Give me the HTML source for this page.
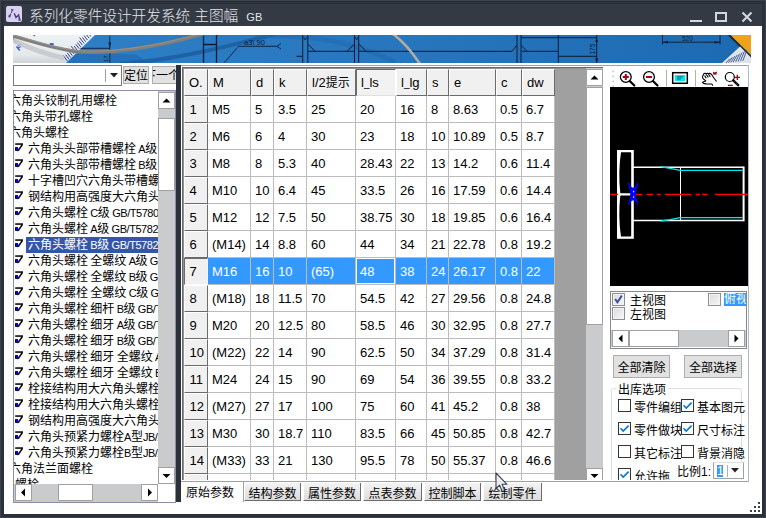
<!DOCTYPE html>
<html lang="zh-CN"><head><meta charset="utf-8"><title>系列化零件设计开发系统</title>
<style>
html,body{margin:0;padding:0}
body{width:766px;height:518px;overflow:hidden;position:relative;background:#2e343e;font-family:"Liberation Sans","Noto Sans CJK SC",sans-serif;}
.a{position:absolute;box-sizing:border-box}
.s{font:12px/16px "Liberation Sans","Noto Sans CJK SC",sans-serif;color:#000;white-space:nowrap}
.t{font:13px/27px "Liberation Sans","Noto Sans CJK SC",sans-serif;color:#000;white-space:nowrap;overflow:hidden}
.hc{background:#f0f0f0;border-top:1px solid #fff;border-left:1px solid #fff;border-right:1px solid #6b6b6b;border-bottom:1px solid #6b6b6b;padding-left:4px;line-height:27px}
.dc{background:#fff;border-right:1px solid #bcbcbc;border-bottom:1px solid #bcbcbc;padding-left:4px;line-height:28px}
.sel{background:#3399ff;color:#fff}
.sb{background:#fff;border:1px solid #a0a0a0}
.l{font-size:11px;letter-spacing:-0.45px;word-spacing:-0.3px}
.trk{background:#c9cbcd}
.btn{background:#e1e1e1;border:1px solid #adadad;text-align:center}
.cb{width:13px;height:13px;background:#fff;border:1px solid #333}
.tab{background:#f0f0f0;border-right:1px solid #6b6b6b;border-bottom:1px solid #6b6b6b;border-left:1px solid #fff;text-align:center;background:linear-gradient(#f4f4f4,#dcdcdc);font:12px/23px "Liberation Sans","Noto Sans CJK SC",sans-serif;white-space:nowrap;overflow:hidden}
</style></head>
<body>
<div class="a" style="left:0px;top:0px;width:766px;height:518px;background:#2b313a;border:1.5px solid #3b424c;"></div>
<div class="a" style="left:4px;top:4px;width:758px;height:22px;background:#333a44;"></div>
<svg class="a" style="left:6px;top:6px" width="16" height="16" viewBox="0 0 16 16"><rect x="0" y="0" width="16" height="16" rx="2" fill="#d9d0f2"/><polygon points="5,2.8 8,3.8 5.6,5.8" fill="#4a3f78"/><path d="M6 5.5 L3.9 9.3" fill="none" stroke="#4a3f78" stroke-width="1.2" stroke-dasharray="1.6 0.9"/><polygon points="2.3,9.4 4.9,8.7 4.3,11.5 2.5,11.2" fill="#4a3f78"/><path d="M8.2 7.2 L10 11.6 L12.6 9 L13.5 13.2" fill="none" stroke="#4a3f78" stroke-width="1.4"/><rect x="12.4" y="12.6" width="2.3" height="2.2" fill="#5a4f90"/></svg>
<div class="a" style="left:29px;top:4.5px;height:22px;line-height:22px;font-size:14.67px;font-weight:300;color:#e4e6ec;white-space:nowrap">系列化零件设计开发系统 主图幅 <span style="font-size:11px;position:relative;left:4px;top:0.5px;font-weight:400">GB</span></div>
<div class="a" style="left:690px;top:20px;width:12px;height:2px;background:#d3d6e2;"></div>
<div class="a" style="left:715px;top:12px;width:12px;height:10px;border:2px solid #d3d6e2;border-top-width:2px;"></div>
<svg class="a" style="left:741px;top:11px" width="12" height="12" viewBox="0 0 12 12"><path d="M1.5 1.5 L10.5 10.5 M10.5 1.5 L1.5 10.5" stroke="#d3d6e2" stroke-width="2.1" fill="none"/></svg>
<div class="a" style="left:4px;top:26px;width:758px;height:488px;background:#fff;"></div>
<svg class="a" style="left:13px;top:35px" width="738" height="28" viewBox="13 35 738 28"><defs><linearGradient id="bg" x1="0" x2="1" y1="0" y2="0"><stop offset="0" stop-color="#2f80c8"/><stop offset="0.5" stop-color="#2877be"/><stop offset="1" stop-color="#1c6ab2"/></linearGradient><linearGradient id="rl" x1="0" x2="0" y1="0" y2="1"><stop offset="0" stop-color="#eef2f5"/><stop offset="0.7" stop-color="#e4e9ec"/><stop offset="1" stop-color="#cfd3d6"/></linearGradient></defs><rect x="13" y="35" width="738" height="28" fill="url(#bg)"/><path d="M66 63 L75 54 H135 L150 63 Z" fill="#1f69ae" opacity="0.6"/><polygon points="13,35 95,35 66,63 13,63" fill="url(#rl)"/><path d="M87.9 28.7 L92.4 34.7 M87.5 32.0 L90.8 36.5 M85.8 33.8 L89.1 38.2 M84.1 35.5 L87.4 40.0 M82.4 37.3 L85.7 41.7 M79.6 37.5 L84.1 43.5 M79.1 40.8 L82.4 45.2 M77.4 42.5 L80.7 47.0 M75.8 44.3 L79.1 48.7 M74.1 46.0 L77.4 50.5 M71.2 46.2 L75.7 52.2 M70.8 49.5 L74.1 54.0 M69.1 51.3 L72.4 55.7 M67.4 53.0 L70.7 57.5 M65.8 54.8 L69.1 59.2 M62.9 55.0 L67.4 61.0 " stroke="#2a3592" stroke-width="0.95" fill="none"/><path d="M13.3 38.5 L16.5 43 M16.5 46.5 L19.8 50.5 M33.5 35 L35 36" stroke="#3b62c8" stroke-width="1.5"/><text x="17" y="48" font-size="7.5" fill="#2f5ed0" font-family="Liberation Sans, sans-serif" font-weight="bold">9</text><rect x="49.8" y="43" width="3.8" height="2.8" fill="#3a6ac8"/><path d="M80.5 48.3 H110 M109.8 36 V63" stroke="#0c1c34" stroke-width="1" fill="none" opacity="0.85"/><polygon points="109.8,47.5 108.3,42.5 111.3,42.5" fill="#0c1c34"/><text x="0" y="0" font-size="6" fill="#0c1c34" font-family="Liberation Sans, sans-serif" transform="translate(108 62) rotate(-90)">17</text><path d="M13 40 C30 49 45 54 64 58" stroke="#c6c9cc" stroke-width="5" fill="none" opacity="0.9"/><path d="M120 64 C170 60 215 50 275 34" stroke="#1d5e9e" stroke-width="4" fill="none" opacity="0.85"/><path d="M255 36 C300 34 350 40 395 62" stroke="#2168ac" stroke-width="5" fill="none" opacity="0.55"/><g stroke="#0c1c34" fill="none" stroke-width="1.1"><path d="M203.5 35 V63 M216.5 35 V63 M203.5 44.5 H216.5" stroke-width="1.3"/><path d="M224 63 L238.5 46.3 H277 M281 43.5 L277 46.3 L281 49" stroke-width="0.9"/><path d="M302.7 35 V63 M307.8 35 V63 M354.5 35 V63 M358.7 35 V63" stroke-width="1"/><path d="M308 51.3 H354.5 M359 51.3 H512 M308 44 L315 51.3 M354.5 44 L347 51.3 M359 44 L366 51.3 M296.5 56.3 H302.5" stroke-width="1"/><path d="M517 35 V63 M521 35 V63 M522 51.3 H558 M512 51.3 L517 45 M521 45 L527 51.3" stroke-width="1"/><path d="M558.3 35 V63 M521 37.7 H597 M558.3 56.3 H597 M596.7 35 V63" stroke-width="1"/><path d="M662.5 35 V44.5 M720 35 V44.5 M662.5 42.2 H720" stroke-width="0.9"/></g><g fill="#0c1c34"><polygon points="596.7,38 595.2,42 598.2,42"/><polygon points="596.7,63 595.2,58.5 598.2,58.5"/><polygon points="662.5,42.2 668,41 668,43.4"/><polygon points="720,42.2 714.5,41 714.5,43.4"/></g><text x="244" y="45" font-size="7.5" font-family="Liberation Sans, sans-serif" fill="#0c1c34">a3\ 90</text><path d="M303.5 37 L305.2 40 L307 37 M355.2 37 L356.6 40 L358 37" stroke="#0c1c34" stroke-width="0.8" fill="none"/><text x="682" y="41.2" font-size="6.5" font-family="Liberation Sans, sans-serif" fill="#0c1c34">520</text><text x="0" y="0" font-size="6.5" font-family="Liberation Sans, sans-serif" fill="#0c1c34" transform="translate(594.5 54.5) rotate(-90)">175</text><path d="M13 36 C35 42 55 49 78 51.7 C100 53.5 135 50 165 43.5 C180 40 192 37 204 33.5" stroke="#827e7a" stroke-width="3.4" fill="none"/><path d="M13 35 C35 41 55 48 78 50.7 C100 52.5 135 49 165 42.5 C180 39 192 36 204 32.5" stroke="#9a968f" stroke-width="0.8" fill="none"/><path d="M393 34 C404 42 412 52 420 64" stroke="#b3aca4" stroke-width="2.6" fill="none"/><polygon points="730,35 751,35 751,55" fill="#f0a21c"/><path d="M729 35 L751 57" stroke="#1a2a44" stroke-width="2" fill="none"/><polygon points="722,63 740,46.5 751,57.5 751,63" fill="#dfe4ea"/><path d="M726 63 L730 58.5 M728.4 62.7 L732.4 57.3 M730.8 62.4 L734.8 56.1 M733.2 62.1 L737.2 54.9 M735.6 61.8 L739.6 53.7 M738 61.5 L742 52.5 M740.4 61.2 L744.4 51.3 M742.8 60.9 L746.8 50.1 " stroke="#34508c" stroke-width="0.9" fill="none"/></svg>
<div class="a" style="left:13px;top:65px;width:109px;height:21px;background:#fff;border:1px solid #7a7a7a;"></div>
<div class="a" style="left:105px;top:69px;width:1px;height:13px;background:#a0a0a0;"></div>
<svg class="a" style="left:110px;top:73px" width="8" height="5" viewBox="0 0 8 5"><path d="M0 0 H8 L4 4.5 Z" fill="#222"/></svg>
<div class="a btn s" style="left:123px;top:66px;width:26px;height:18px;overflow:hidden;"><span style="position:relative;top:1px">定位</span></div>
<div class="a btn s" style="left:152px;top:66px;width:40px;height:18px;overflow:hidden;text-align:left;"><span style="position:relative;top:1px;left:-9px">下一个</span></div>
<div class="a" style="left:13px;top:90px;width:163px;height:413px;background:#fff;border:1px solid #8c8fa4;overflow:hidden;"></div>
<div class="a" style="left:14px;top:91px;width:144px;height:393px;overflow:hidden">
<div class="a s" style="left:-5px;top:2px;height:16px">六角头铰制孔用螺栓</div>
<div class="a s" style="left:-5px;top:18px;height:16px">六角头带孔螺栓</div>
<div class="a s" style="left:-5px;top:34px;height:16px">六角头螺栓</div>
<div class="a" style="left:0;top:50px;width:14px;height:16px"><svg class="a" style="left:1px;top:2px" width="9" height="9" viewBox="0 0 9 9"><rect x="0.2" y="0.3" width="7.8" height="1.5" fill="#000"/><path d="M7.4 1.5 L3.6 7" fill="none" stroke="#000" stroke-width="1.4"/><path d="M0.5 4.3 V7.6 H4.2 M0.5 4.6 H3" fill="none" stroke="#000" stroke-width="1"/><rect x="1" y="5" width="2.4" height="2.2" fill="#0000ff"/></svg></div><div class="a s" style="left:14px;top:50px;height:16px">六角头头部带槽螺栓<span class="l"> A</span>级<span class="l"> GB/T</span></div>
<div class="a" style="left:0;top:66px;width:14px;height:16px"><svg class="a" style="left:1px;top:2px" width="9" height="9" viewBox="0 0 9 9"><rect x="0.2" y="0.3" width="7.8" height="1.5" fill="#000"/><path d="M7.4 1.5 L3.6 7" fill="none" stroke="#000" stroke-width="1.4"/><path d="M0.5 4.3 V7.6 H4.2 M0.5 4.6 H3" fill="none" stroke="#000" stroke-width="1"/><rect x="1" y="5" width="2.4" height="2.2" fill="#0000ff"/></svg></div><div class="a s" style="left:14px;top:66px;height:16px">六角头头部带槽螺栓<span class="l"> B</span>级<span class="l"> GB/T</span></div>
<div class="a" style="left:0;top:82px;width:14px;height:16px"><svg class="a" style="left:1px;top:2px" width="9" height="9" viewBox="0 0 9 9"><rect x="0.2" y="0.3" width="7.8" height="1.5" fill="#000"/><path d="M7.4 1.5 L3.6 7" fill="none" stroke="#000" stroke-width="1.4"/><path d="M0.5 4.3 V7.6 H4.2 M0.5 4.6 H3" fill="none" stroke="#000" stroke-width="1"/><rect x="1" y="5" width="2.4" height="2.2" fill="#0000ff"/></svg></div><div class="a s" style="left:14px;top:82px;height:16px">十字槽凹穴六角头带槽螺栓</div>
<div class="a" style="left:0;top:98px;width:14px;height:16px"><svg class="a" style="left:1px;top:2px" width="9" height="9" viewBox="0 0 9 9"><rect x="0.2" y="0.3" width="7.8" height="1.5" fill="#000"/><path d="M7.4 1.5 L3.6 7" fill="none" stroke="#000" stroke-width="1.4"/><path d="M0.5 4.3 V7.6 H4.2 M0.5 4.6 H3" fill="none" stroke="#000" stroke-width="1"/><rect x="1" y="5" width="2.4" height="2.2" fill="#0000ff"/></svg></div><div class="a s" style="left:14px;top:98px;height:16px">钢结构用高强度大六角头螺栓</div>
<div class="a" style="left:0;top:114px;width:14px;height:16px"><svg class="a" style="left:1px;top:2px" width="9" height="9" viewBox="0 0 9 9"><rect x="0.2" y="0.3" width="7.8" height="1.5" fill="#000"/><path d="M7.4 1.5 L3.6 7" fill="none" stroke="#000" stroke-width="1.4"/><path d="M0.5 4.3 V7.6 H4.2 M0.5 4.6 H3" fill="none" stroke="#000" stroke-width="1"/><rect x="1" y="5" width="2.4" height="2.2" fill="#0000ff"/></svg></div><div class="a s" style="left:14px;top:114px;height:16px">六角头螺栓<span class="l"> C</span>级<span class="l"> GB/T5780</span></div>
<div class="a" style="left:0;top:130px;width:14px;height:16px"><svg class="a" style="left:1px;top:2px" width="9" height="9" viewBox="0 0 9 9"><rect x="0.2" y="0.3" width="7.8" height="1.5" fill="#000"/><path d="M7.4 1.5 L3.6 7" fill="none" stroke="#000" stroke-width="1.4"/><path d="M0.5 4.3 V7.6 H4.2 M0.5 4.6 H3" fill="none" stroke="#000" stroke-width="1"/><rect x="1" y="5" width="2.4" height="2.2" fill="#0000ff"/></svg></div><div class="a s" style="left:14px;top:130px;height:16px">六角头螺栓<span class="l"> A</span>级<span class="l"> GB/T5782</span></div>
<div class="a" style="left:0;top:146px;width:14px;height:16px"><svg class="a" style="left:1px;top:2px" width="9" height="9" viewBox="0 0 9 9"><rect x="0.2" y="0.3" width="7.8" height="1.5" fill="#000"/><path d="M7.4 1.5 L3.6 7" fill="none" stroke="#000" stroke-width="1.4"/><path d="M0.5 4.3 V7.6 H4.2 M0.5 4.6 H3" fill="none" stroke="#000" stroke-width="1"/><rect x="1" y="5" width="2.4" height="2.2" fill="#0000ff"/></svg></div><div class="a s" style="left:12px;top:146px;height:16px;padding:0 2px;background:#3456a6;color:#fff;width:140px">六角头螺栓<span class="l"> B</span>级<span class="l"> GB/T5782</span></div>
<div class="a" style="left:0;top:162px;width:14px;height:16px"><svg class="a" style="left:1px;top:2px" width="9" height="9" viewBox="0 0 9 9"><rect x="0.2" y="0.3" width="7.8" height="1.5" fill="#000"/><path d="M7.4 1.5 L3.6 7" fill="none" stroke="#000" stroke-width="1.4"/><path d="M0.5 4.3 V7.6 H4.2 M0.5 4.6 H3" fill="none" stroke="#000" stroke-width="1"/><rect x="1" y="5" width="2.4" height="2.2" fill="#0000ff"/></svg></div><div class="a s" style="left:14px;top:162px;height:16px">六角头螺栓<span class="l"> </span>全螺纹<span class="l"> A</span>级<span class="l"> GB/T</span></div>
<div class="a" style="left:0;top:178px;width:14px;height:16px"><svg class="a" style="left:1px;top:2px" width="9" height="9" viewBox="0 0 9 9"><rect x="0.2" y="0.3" width="7.8" height="1.5" fill="#000"/><path d="M7.4 1.5 L3.6 7" fill="none" stroke="#000" stroke-width="1.4"/><path d="M0.5 4.3 V7.6 H4.2 M0.5 4.6 H3" fill="none" stroke="#000" stroke-width="1"/><rect x="1" y="5" width="2.4" height="2.2" fill="#0000ff"/></svg></div><div class="a s" style="left:14px;top:178px;height:16px">六角头螺栓<span class="l"> </span>全螺纹<span class="l"> B</span>级<span class="l"> GB/T</span></div>
<div class="a" style="left:0;top:194px;width:14px;height:16px"><svg class="a" style="left:1px;top:2px" width="9" height="9" viewBox="0 0 9 9"><rect x="0.2" y="0.3" width="7.8" height="1.5" fill="#000"/><path d="M7.4 1.5 L3.6 7" fill="none" stroke="#000" stroke-width="1.4"/><path d="M0.5 4.3 V7.6 H4.2 M0.5 4.6 H3" fill="none" stroke="#000" stroke-width="1"/><rect x="1" y="5" width="2.4" height="2.2" fill="#0000ff"/></svg></div><div class="a s" style="left:14px;top:194px;height:16px">六角头螺栓<span class="l"> </span>全螺纹<span class="l"> C</span>级<span class="l"> GB/T</span></div>
<div class="a" style="left:0;top:210px;width:14px;height:16px"><svg class="a" style="left:1px;top:2px" width="9" height="9" viewBox="0 0 9 9"><rect x="0.2" y="0.3" width="7.8" height="1.5" fill="#000"/><path d="M7.4 1.5 L3.6 7" fill="none" stroke="#000" stroke-width="1.4"/><path d="M0.5 4.3 V7.6 H4.2 M0.5 4.6 H3" fill="none" stroke="#000" stroke-width="1"/><rect x="1" y="5" width="2.4" height="2.2" fill="#0000ff"/></svg></div><div class="a s" style="left:14px;top:210px;height:16px">六角头螺栓<span class="l"> </span>细杆<span class="l"> B</span>级<span class="l"> GB/T</span></div>
<div class="a" style="left:0;top:226px;width:14px;height:16px"><svg class="a" style="left:1px;top:2px" width="9" height="9" viewBox="0 0 9 9"><rect x="0.2" y="0.3" width="7.8" height="1.5" fill="#000"/><path d="M7.4 1.5 L3.6 7" fill="none" stroke="#000" stroke-width="1.4"/><path d="M0.5 4.3 V7.6 H4.2 M0.5 4.6 H3" fill="none" stroke="#000" stroke-width="1"/><rect x="1" y="5" width="2.4" height="2.2" fill="#0000ff"/></svg></div><div class="a s" style="left:14px;top:226px;height:16px">六角头螺栓<span class="l"> </span>细牙<span class="l"> A</span>级<span class="l"> GB/T</span></div>
<div class="a" style="left:0;top:242px;width:14px;height:16px"><svg class="a" style="left:1px;top:2px" width="9" height="9" viewBox="0 0 9 9"><rect x="0.2" y="0.3" width="7.8" height="1.5" fill="#000"/><path d="M7.4 1.5 L3.6 7" fill="none" stroke="#000" stroke-width="1.4"/><path d="M0.5 4.3 V7.6 H4.2 M0.5 4.6 H3" fill="none" stroke="#000" stroke-width="1"/><rect x="1" y="5" width="2.4" height="2.2" fill="#0000ff"/></svg></div><div class="a s" style="left:14px;top:242px;height:16px">六角头螺栓<span class="l"> </span>细牙<span class="l"> B</span>级<span class="l"> GB/T</span></div>
<div class="a" style="left:0;top:258px;width:14px;height:16px"><svg class="a" style="left:1px;top:2px" width="9" height="9" viewBox="0 0 9 9"><rect x="0.2" y="0.3" width="7.8" height="1.5" fill="#000"/><path d="M7.4 1.5 L3.6 7" fill="none" stroke="#000" stroke-width="1.4"/><path d="M0.5 4.3 V7.6 H4.2 M0.5 4.6 H3" fill="none" stroke="#000" stroke-width="1"/><rect x="1" y="5" width="2.4" height="2.2" fill="#0000ff"/></svg></div><div class="a s" style="left:14px;top:258px;height:16px">六角头螺栓<span class="l"> </span>细牙<span class="l"> </span>全螺纹<span class="l"> A</span>级</div>
<div class="a" style="left:0;top:274px;width:14px;height:16px"><svg class="a" style="left:1px;top:2px" width="9" height="9" viewBox="0 0 9 9"><rect x="0.2" y="0.3" width="7.8" height="1.5" fill="#000"/><path d="M7.4 1.5 L3.6 7" fill="none" stroke="#000" stroke-width="1.4"/><path d="M0.5 4.3 V7.6 H4.2 M0.5 4.6 H3" fill="none" stroke="#000" stroke-width="1"/><rect x="1" y="5" width="2.4" height="2.2" fill="#0000ff"/></svg></div><div class="a s" style="left:14px;top:274px;height:16px">六角头螺栓<span class="l"> </span>细牙<span class="l"> </span>全螺纹<span class="l"> B</span>级</div>
<div class="a" style="left:0;top:290px;width:14px;height:16px"><svg class="a" style="left:1px;top:2px" width="9" height="9" viewBox="0 0 9 9"><rect x="0.2" y="0.3" width="7.8" height="1.5" fill="#000"/><path d="M7.4 1.5 L3.6 7" fill="none" stroke="#000" stroke-width="1.4"/><path d="M0.5 4.3 V7.6 H4.2 M0.5 4.6 H3" fill="none" stroke="#000" stroke-width="1"/><rect x="1" y="5" width="2.4" height="2.2" fill="#0000ff"/></svg></div><div class="a s" style="left:14px;top:290px;height:16px">栓接结构用大六角头螺栓</div>
<div class="a" style="left:0;top:306px;width:14px;height:16px"><svg class="a" style="left:1px;top:2px" width="9" height="9" viewBox="0 0 9 9"><rect x="0.2" y="0.3" width="7.8" height="1.5" fill="#000"/><path d="M7.4 1.5 L3.6 7" fill="none" stroke="#000" stroke-width="1.4"/><path d="M0.5 4.3 V7.6 H4.2 M0.5 4.6 H3" fill="none" stroke="#000" stroke-width="1"/><rect x="1" y="5" width="2.4" height="2.2" fill="#0000ff"/></svg></div><div class="a s" style="left:14px;top:306px;height:16px">栓接结构用大六角头螺栓</div>
<div class="a" style="left:0;top:322px;width:14px;height:16px"><svg class="a" style="left:1px;top:2px" width="9" height="9" viewBox="0 0 9 9"><rect x="0.2" y="0.3" width="7.8" height="1.5" fill="#000"/><path d="M7.4 1.5 L3.6 7" fill="none" stroke="#000" stroke-width="1.4"/><path d="M0.5 4.3 V7.6 H4.2 M0.5 4.6 H3" fill="none" stroke="#000" stroke-width="1"/><rect x="1" y="5" width="2.4" height="2.2" fill="#0000ff"/></svg></div><div class="a s" style="left:14px;top:322px;height:16px">钢结构用高强度大六角头螺栓</div>
<div class="a" style="left:0;top:338px;width:14px;height:16px"><svg class="a" style="left:1px;top:2px" width="9" height="9" viewBox="0 0 9 9"><rect x="0.2" y="0.3" width="7.8" height="1.5" fill="#000"/><path d="M7.4 1.5 L3.6 7" fill="none" stroke="#000" stroke-width="1.4"/><path d="M0.5 4.3 V7.6 H4.2 M0.5 4.6 H3" fill="none" stroke="#000" stroke-width="1"/><rect x="1" y="5" width="2.4" height="2.2" fill="#0000ff"/></svg></div><div class="a s" style="left:14px;top:338px;height:16px">六角头预紧力螺栓<span class="l">A</span>型<span class="l">JB/ZQ</span></div>
<div class="a" style="left:0;top:354px;width:14px;height:16px"><svg class="a" style="left:1px;top:2px" width="9" height="9" viewBox="0 0 9 9"><rect x="0.2" y="0.3" width="7.8" height="1.5" fill="#000"/><path d="M7.4 1.5 L3.6 7" fill="none" stroke="#000" stroke-width="1.4"/><path d="M0.5 4.3 V7.6 H4.2 M0.5 4.6 H3" fill="none" stroke="#000" stroke-width="1"/><rect x="1" y="5" width="2.4" height="2.2" fill="#0000ff"/></svg></div><div class="a s" style="left:14px;top:354px;height:16px">六角头预紧力螺栓<span class="l">B</span>型<span class="l">JB/ZQ</span></div>
<div class="a s" style="left:-5px;top:370px;height:16px">六角法兰面螺栓</div>
<div class="a s" style="left:1px;top:386px;height:16px">螺栓</div>
</div>
<div class="a trk" style="left:158px;top:91px;width:17px;height:393px;"></div>
<div class="a sb" style="left:158px;top:92px;width:17px;height:17px;"></div>
<div class="a sb" style="left:158px;top:118px;width:17px;height:73px;"></div>
<div class="a sb" style="left:158px;top:467px;width:17px;height:17px;"></div>
<div class="a trk" style="left:14px;top:484px;width:144px;height:18px;"></div>
<div class="a sb" style="left:15px;top:484px;width:17px;height:17px;"></div>
<div class="a sb" style="left:58px;top:484px;width:35px;height:17px;"></div>
<div class="a sb" style="left:141px;top:484px;width:17px;height:17px;"></div>
<div class="a" style="left:158px;top:484px;width:17px;height:18px;background:#fff;"></div>
<svg class="a" style="left:0;top:0" width="766" height="518"><polygon points="162.5,102.5 170.5,102.5 166.5,98.5" fill="#000"/><polygon points="162.5,474 170.5,474 166.5,478" fill="#000"/><polygon points="25,488.5 25,496.5 21,492.5" fill="#000"/><polygon points="148,488.5 148,496.5 152,492.5" fill="#000"/></svg>
<div class="a" style="left:176px;top:65px;width:5px;height:437px;background:#2b313a;"></div>
<div class="a" style="left:181px;top:65px;width:422px;height:416px;background:#fff;"></div>
<div class="a" style="left:181px;top:65px;width:568px;height:1px;background:#a0a0a0;"></div>
<div class="a" style="left:182px;top:67px;width:421px;height:414px;background:#a0a0a0;border-top:1px solid #6b6b6b;border-left:1px solid #6b6b6b;"></div>
<div class="a" style="left:183px;top:68px;width:420px;height:413px;border-top:1px solid #909090;border-left:1px solid #909090;"></div>
<div class="a" style="left:0;top:0;width:603px;height:480px;overflow:hidden">
<div class="a t hc" style="left:184px;top:69px;width:24px;height:27px;line-height:25px;">O.</div>
<div class="a t hc" style="left:208px;top:69px;width:43px;height:27px;line-height:25px;">M</div>
<div class="a t hc" style="left:251px;top:69px;width:23px;height:27px;line-height:25px;">d</div>
<div class="a t hc" style="left:274px;top:69px;width:33px;height:27px;line-height:25px;">k</div>
<div class="a t hc" style="left:307px;top:69px;width:49px;height:27px;line-height:25px;">l/2<span style="font-size:12px">提示</span></div>
<div class="a t hc" style="left:356px;top:69px;width:40px;height:27px;border-left:1px solid #6b6b6b;border-top:1px solid #6b6b6b;border-right:1px solid #fff;border-bottom:1px solid #e0e0e0;background:#f2f2f2;line-height:25px;">l<span style="font-size:10px">_</span>ls</div>
<div class="a t hc" style="left:396px;top:69px;width:31px;height:27px;line-height:25px;">l<span style="font-size:10px">_</span>lg</div>
<div class="a t hc" style="left:427px;top:69px;width:22px;height:27px;line-height:25px;">s</div>
<div class="a t hc" style="left:449px;top:69px;width:47px;height:27px;line-height:25px;">e</div>
<div class="a t hc" style="left:496px;top:69px;width:26px;height:27px;line-height:25px;">c</div>
<div class="a t hc" style="left:522px;top:69px;width:33px;height:27px;line-height:25px;">dw</div>
<div class="a t hc" style="left:184px;top:96px;width:24px;height:27px;line-height:25px;padding-left:4.5px;">1</div>
<div class="a t dc" style="left:208px;top:96px;width:43px;height:27px;">M5</div>
<div class="a t dc" style="left:251px;top:96px;width:23px;height:27px;">5</div>
<div class="a t dc" style="left:274px;top:96px;width:33px;height:27px;">3.5</div>
<div class="a t dc" style="left:307px;top:96px;width:49px;height:27px;">25</div>
<div class="a t dc" style="left:356px;top:96px;width:40px;height:27px;">20</div>
<div class="a t dc" style="left:396px;top:96px;width:31px;height:27px;">16</div>
<div class="a t dc" style="left:427px;top:96px;width:22px;height:27px;">8</div>
<div class="a t dc" style="left:449px;top:96px;width:47px;height:27px;">8.63</div>
<div class="a t dc" style="left:496px;top:96px;width:26px;height:27px;">0.5</div>
<div class="a t dc" style="left:522px;top:96px;width:33px;height:27px;">6.7</div>
<div class="a t hc" style="left:184px;top:123px;width:24px;height:27px;line-height:25px;padding-left:4.5px;">2</div>
<div class="a t dc" style="left:208px;top:123px;width:43px;height:27px;">M6</div>
<div class="a t dc" style="left:251px;top:123px;width:23px;height:27px;">6</div>
<div class="a t dc" style="left:274px;top:123px;width:33px;height:27px;">4</div>
<div class="a t dc" style="left:307px;top:123px;width:49px;height:27px;">30</div>
<div class="a t dc" style="left:356px;top:123px;width:40px;height:27px;">23</div>
<div class="a t dc" style="left:396px;top:123px;width:31px;height:27px;">18</div>
<div class="a t dc" style="left:427px;top:123px;width:22px;height:27px;">10</div>
<div class="a t dc" style="left:449px;top:123px;width:47px;height:27px;">10.89</div>
<div class="a t dc" style="left:496px;top:123px;width:26px;height:27px;">0.5</div>
<div class="a t dc" style="left:522px;top:123px;width:33px;height:27px;">8.7</div>
<div class="a t hc" style="left:184px;top:150px;width:24px;height:27px;line-height:25px;padding-left:4.5px;">3</div>
<div class="a t dc" style="left:208px;top:150px;width:43px;height:27px;">M8</div>
<div class="a t dc" style="left:251px;top:150px;width:23px;height:27px;">8</div>
<div class="a t dc" style="left:274px;top:150px;width:33px;height:27px;">5.3</div>
<div class="a t dc" style="left:307px;top:150px;width:49px;height:27px;">40</div>
<div class="a t dc" style="left:356px;top:150px;width:40px;height:27px;">28.43</div>
<div class="a t dc" style="left:396px;top:150px;width:31px;height:27px;">22</div>
<div class="a t dc" style="left:427px;top:150px;width:22px;height:27px;">13</div>
<div class="a t dc" style="left:449px;top:150px;width:47px;height:27px;">14.2</div>
<div class="a t dc" style="left:496px;top:150px;width:26px;height:27px;">0.6</div>
<div class="a t dc" style="left:522px;top:150px;width:33px;height:27px;">11.4</div>
<div class="a t hc" style="left:184px;top:177px;width:24px;height:27px;line-height:25px;padding-left:4.5px;">4</div>
<div class="a t dc" style="left:208px;top:177px;width:43px;height:27px;">M10</div>
<div class="a t dc" style="left:251px;top:177px;width:23px;height:27px;">10</div>
<div class="a t dc" style="left:274px;top:177px;width:33px;height:27px;">6.4</div>
<div class="a t dc" style="left:307px;top:177px;width:49px;height:27px;">45</div>
<div class="a t dc" style="left:356px;top:177px;width:40px;height:27px;">33.5</div>
<div class="a t dc" style="left:396px;top:177px;width:31px;height:27px;">26</div>
<div class="a t dc" style="left:427px;top:177px;width:22px;height:27px;">16</div>
<div class="a t dc" style="left:449px;top:177px;width:47px;height:27px;">17.59</div>
<div class="a t dc" style="left:496px;top:177px;width:26px;height:27px;">0.6</div>
<div class="a t dc" style="left:522px;top:177px;width:33px;height:27px;">14.4</div>
<div class="a t hc" style="left:184px;top:204px;width:24px;height:27px;line-height:25px;padding-left:4.5px;">5</div>
<div class="a t dc" style="left:208px;top:204px;width:43px;height:27px;">M12</div>
<div class="a t dc" style="left:251px;top:204px;width:23px;height:27px;">12</div>
<div class="a t dc" style="left:274px;top:204px;width:33px;height:27px;">7.5</div>
<div class="a t dc" style="left:307px;top:204px;width:49px;height:27px;">50</div>
<div class="a t dc" style="left:356px;top:204px;width:40px;height:27px;">38.75</div>
<div class="a t dc" style="left:396px;top:204px;width:31px;height:27px;">30</div>
<div class="a t dc" style="left:427px;top:204px;width:22px;height:27px;">18</div>
<div class="a t dc" style="left:449px;top:204px;width:47px;height:27px;">19.85</div>
<div class="a t dc" style="left:496px;top:204px;width:26px;height:27px;">0.6</div>
<div class="a t dc" style="left:522px;top:204px;width:33px;height:27px;">16.4</div>
<div class="a t hc" style="left:184px;top:231px;width:24px;height:27px;line-height:25px;padding-left:4.5px;">6</div>
<div class="a t dc" style="left:208px;top:231px;width:43px;height:27px;">(M14)</div>
<div class="a t dc" style="left:251px;top:231px;width:23px;height:27px;">14</div>
<div class="a t dc" style="left:274px;top:231px;width:33px;height:27px;">8.8</div>
<div class="a t dc" style="left:307px;top:231px;width:49px;height:27px;">60</div>
<div class="a t dc" style="left:356px;top:231px;width:40px;height:27px;">44</div>
<div class="a t dc" style="left:396px;top:231px;width:31px;height:27px;">34</div>
<div class="a t dc" style="left:427px;top:231px;width:22px;height:27px;">21</div>
<div class="a t dc" style="left:449px;top:231px;width:47px;height:27px;">22.78</div>
<div class="a t dc" style="left:496px;top:231px;width:26px;height:27px;">0.8</div>
<div class="a t dc" style="left:522px;top:231px;width:33px;height:27px;">19.2</div>
<div class="a t hc" style="left:184px;top:258px;width:24px;height:27px;border-left:1px solid #6b6b6b;border-top:1px solid #6b6b6b;border-right:1px solid #f4f4f4;border-bottom:1px solid #fafafa;line-height:25px;padding-left:4.5px;">7</div>
<div class="a t dc sel" style="left:208px;top:258px;width:43px;height:27px;">M16</div>
<div class="a t dc sel" style="left:251px;top:258px;width:23px;height:27px;">16</div>
<div class="a t dc sel" style="left:274px;top:258px;width:33px;height:27px;">10</div>
<div class="a t dc sel" style="left:307px;top:258px;width:49px;height:27px;">(65)</div>
<div class="a t dc sel" style="left:356px;top:258px;width:40px;height:27px;box-shadow:inset 0 0 0 1px #fff;">48</div>
<div class="a t dc sel" style="left:396px;top:258px;width:31px;height:27px;">38</div>
<div class="a t dc sel" style="left:427px;top:258px;width:22px;height:27px;">24</div>
<div class="a t dc sel" style="left:449px;top:258px;width:47px;height:27px;">26.17</div>
<div class="a t dc sel" style="left:496px;top:258px;width:26px;height:27px;">0.8</div>
<div class="a t dc sel" style="left:522px;top:258px;width:33px;height:27px;">22</div>
<div class="a t hc" style="left:184px;top:285px;width:24px;height:27px;line-height:25px;padding-left:4.5px;">8</div>
<div class="a t dc" style="left:208px;top:285px;width:43px;height:27px;">(M18)</div>
<div class="a t dc" style="left:251px;top:285px;width:23px;height:27px;">18</div>
<div class="a t dc" style="left:274px;top:285px;width:33px;height:27px;">11.5</div>
<div class="a t dc" style="left:307px;top:285px;width:49px;height:27px;">70</div>
<div class="a t dc" style="left:356px;top:285px;width:40px;height:27px;">54.5</div>
<div class="a t dc" style="left:396px;top:285px;width:31px;height:27px;">42</div>
<div class="a t dc" style="left:427px;top:285px;width:22px;height:27px;">27</div>
<div class="a t dc" style="left:449px;top:285px;width:47px;height:27px;">29.56</div>
<div class="a t dc" style="left:496px;top:285px;width:26px;height:27px;">0.8</div>
<div class="a t dc" style="left:522px;top:285px;width:33px;height:27px;">24.8</div>
<div class="a t hc" style="left:184px;top:312px;width:24px;height:27px;line-height:25px;padding-left:4.5px;">9</div>
<div class="a t dc" style="left:208px;top:312px;width:43px;height:27px;">M20</div>
<div class="a t dc" style="left:251px;top:312px;width:23px;height:27px;">20</div>
<div class="a t dc" style="left:274px;top:312px;width:33px;height:27px;">12.5</div>
<div class="a t dc" style="left:307px;top:312px;width:49px;height:27px;">80</div>
<div class="a t dc" style="left:356px;top:312px;width:40px;height:27px;">58.5</div>
<div class="a t dc" style="left:396px;top:312px;width:31px;height:27px;">46</div>
<div class="a t dc" style="left:427px;top:312px;width:22px;height:27px;">30</div>
<div class="a t dc" style="left:449px;top:312px;width:47px;height:27px;">32.95</div>
<div class="a t dc" style="left:496px;top:312px;width:26px;height:27px;">0.8</div>
<div class="a t dc" style="left:522px;top:312px;width:33px;height:27px;">27.7</div>
<div class="a t hc" style="left:184px;top:339px;width:24px;height:27px;line-height:25px;padding-left:4.5px;">10</div>
<div class="a t dc" style="left:208px;top:339px;width:43px;height:27px;">(M22)</div>
<div class="a t dc" style="left:251px;top:339px;width:23px;height:27px;">22</div>
<div class="a t dc" style="left:274px;top:339px;width:33px;height:27px;">14</div>
<div class="a t dc" style="left:307px;top:339px;width:49px;height:27px;">90</div>
<div class="a t dc" style="left:356px;top:339px;width:40px;height:27px;">62.5</div>
<div class="a t dc" style="left:396px;top:339px;width:31px;height:27px;">50</div>
<div class="a t dc" style="left:427px;top:339px;width:22px;height:27px;">34</div>
<div class="a t dc" style="left:449px;top:339px;width:47px;height:27px;">37.29</div>
<div class="a t dc" style="left:496px;top:339px;width:26px;height:27px;">0.8</div>
<div class="a t dc" style="left:522px;top:339px;width:33px;height:27px;">31.4</div>
<div class="a t hc" style="left:184px;top:366px;width:24px;height:27px;line-height:25px;padding-left:4.5px;">11</div>
<div class="a t dc" style="left:208px;top:366px;width:43px;height:27px;">M24</div>
<div class="a t dc" style="left:251px;top:366px;width:23px;height:27px;">24</div>
<div class="a t dc" style="left:274px;top:366px;width:33px;height:27px;">15</div>
<div class="a t dc" style="left:307px;top:366px;width:49px;height:27px;">90</div>
<div class="a t dc" style="left:356px;top:366px;width:40px;height:27px;">69</div>
<div class="a t dc" style="left:396px;top:366px;width:31px;height:27px;">54</div>
<div class="a t dc" style="left:427px;top:366px;width:22px;height:27px;">36</div>
<div class="a t dc" style="left:449px;top:366px;width:47px;height:27px;">39.55</div>
<div class="a t dc" style="left:496px;top:366px;width:26px;height:27px;">0.8</div>
<div class="a t dc" style="left:522px;top:366px;width:33px;height:27px;">33.2</div>
<div class="a t hc" style="left:184px;top:393px;width:24px;height:27px;line-height:25px;padding-left:4.5px;">12</div>
<div class="a t dc" style="left:208px;top:393px;width:43px;height:27px;">(M27)</div>
<div class="a t dc" style="left:251px;top:393px;width:23px;height:27px;">27</div>
<div class="a t dc" style="left:274px;top:393px;width:33px;height:27px;">17</div>
<div class="a t dc" style="left:307px;top:393px;width:49px;height:27px;">100</div>
<div class="a t dc" style="left:356px;top:393px;width:40px;height:27px;">75</div>
<div class="a t dc" style="left:396px;top:393px;width:31px;height:27px;">60</div>
<div class="a t dc" style="left:427px;top:393px;width:22px;height:27px;">41</div>
<div class="a t dc" style="left:449px;top:393px;width:47px;height:27px;">45.2</div>
<div class="a t dc" style="left:496px;top:393px;width:26px;height:27px;">0.8</div>
<div class="a t dc" style="left:522px;top:393px;width:33px;height:27px;">38</div>
<div class="a t hc" style="left:184px;top:420px;width:24px;height:27px;line-height:25px;padding-left:4.5px;">13</div>
<div class="a t dc" style="left:208px;top:420px;width:43px;height:27px;">M30</div>
<div class="a t dc" style="left:251px;top:420px;width:23px;height:27px;">30</div>
<div class="a t dc" style="left:274px;top:420px;width:33px;height:27px;">18.7</div>
<div class="a t dc" style="left:307px;top:420px;width:49px;height:27px;">110</div>
<div class="a t dc" style="left:356px;top:420px;width:40px;height:27px;">83.5</div>
<div class="a t dc" style="left:396px;top:420px;width:31px;height:27px;">66</div>
<div class="a t dc" style="left:427px;top:420px;width:22px;height:27px;">45</div>
<div class="a t dc" style="left:449px;top:420px;width:47px;height:27px;">50.85</div>
<div class="a t dc" style="left:496px;top:420px;width:26px;height:27px;">0.8</div>
<div class="a t dc" style="left:522px;top:420px;width:33px;height:27px;">42.7</div>
<div class="a t hc" style="left:184px;top:447px;width:24px;height:27px;line-height:25px;padding-left:4.5px;">14</div>
<div class="a t dc" style="left:208px;top:447px;width:43px;height:27px;">(M33)</div>
<div class="a t dc" style="left:251px;top:447px;width:23px;height:27px;">33</div>
<div class="a t dc" style="left:274px;top:447px;width:33px;height:27px;">21</div>
<div class="a t dc" style="left:307px;top:447px;width:49px;height:27px;">130</div>
<div class="a t dc" style="left:356px;top:447px;width:40px;height:27px;">95.5</div>
<div class="a t dc" style="left:396px;top:447px;width:31px;height:27px;">78</div>
<div class="a t dc" style="left:427px;top:447px;width:22px;height:27px;">50</div>
<div class="a t dc" style="left:449px;top:447px;width:47px;height:27px;">55.37</div>
<div class="a t dc" style="left:496px;top:447px;width:26px;height:27px;">0.8</div>
<div class="a t dc" style="left:522px;top:447px;width:33px;height:27px;">46.6</div>
<div class="a t hc" style="left:184px;top:474px;width:24px;height:27px;line-height:25px;padding-left:4.5px;"></div>
<div class="a t dc" style="left:208px;top:474px;width:43px;height:27px;"></div>
<div class="a t dc" style="left:251px;top:474px;width:23px;height:27px;"></div>
<div class="a t dc" style="left:274px;top:474px;width:33px;height:27px;"></div>
<div class="a t dc" style="left:307px;top:474px;width:49px;height:27px;"></div>
<div class="a t dc" style="left:356px;top:474px;width:40px;height:27px;"></div>
<div class="a t dc" style="left:396px;top:474px;width:31px;height:27px;"></div>
<div class="a t dc" style="left:427px;top:474px;width:22px;height:27px;"></div>
<div class="a t dc" style="left:449px;top:474px;width:47px;height:27px;"></div>
<div class="a t dc" style="left:496px;top:474px;width:26px;height:27px;"></div>
<div class="a t dc" style="left:522px;top:474px;width:33px;height:27px;"></div>
</div>
<div class="a trk" style="left:586px;top:68px;width:17px;height:412px;"></div>
<div class="a sb" style="left:586px;top:69px;width:17px;height:17px;"></div>
<div class="a sb" style="left:586px;top:87px;width:17px;height:238px;"></div>
<div class="a sb" style="left:586px;top:468px;width:17px;height:12px;border-bottom:none;"></div>
<svg class="a" style="left:0;top:0" width="766" height="518"><polygon points="590.5,79.5 598.5,79.5 594.5,75.5" fill="#000"/><polygon points="590.5,474 598.5,474 594.5,478" fill="#000"/></svg>
<div class="a" style="left:181px;top:480px;width:568px;height:1px;background:#fff;"></div>
<div class="a" style="left:181px;top:481px;width:568px;height:1px;background:#a0a0a0;"></div>
<div class="a" style="left:182px;top:482px;width:62px;height:20px;background:#fff;border-right:1px solid #a0a0a0;text-align:left;padding-left:4px;font:12px/20px 'Liberation Sans','Noto Sans CJK SC',sans-serif;white-space:nowrap;padding-top:1px">原始参数</div>
<div class="a tab" style="left:244px;top:483px;width:57px;height:18px;">结构参数</div>
<div class="a tab" style="left:303px;top:483px;width:58px;height:18px;">属性参数</div>
<div class="a tab" style="left:363px;top:483px;width:59px;height:18px;">点表参数</div>
<div class="a tab" style="left:424px;top:483px;width:57px;height:18px;">控制脚本</div>
<div class="a tab" style="left:483px;top:483px;width:59px;height:18px;">绘制零件</div>
<div class="a" style="left:748px;top:65px;width:1px;height:417px;background:#b4b8c4;"></div>
<svg class="a" style="left:603px;top:66px" width="145" height="21" viewBox="603 66 145 21"><rect x="612.4" y="70.6" width="1.6" height="1.6" fill="#c4c4c4"/><rect x="612.4" y="75.6" width="1.6" height="1.6" fill="#c4c4c4"/><rect x="612.4" y="80.6" width="1.6" height="1.6" fill="#c4c4c4"/><rect x="612.4" y="85.4" width="1.6" height="1.6" fill="#c4c4c4"/><circle cx="625.8" cy="77" r="5.4" fill="#fff" stroke="#000" stroke-width="1.3"/><path d="M630 81.2 L634.3 85.5" stroke="#000" stroke-width="2.2" stroke-linecap="round"/><path d="M622.8 77 H628.8 M625.8 74 V80" stroke="#a40018" stroke-width="2"/><circle cx="649" cy="77" r="5.4" fill="#fff" stroke="#000" stroke-width="1.3"/><path d="M653.2 81.2 L657.5 85.5" stroke="#000" stroke-width="2.2" stroke-linecap="round"/><path d="M646 77 H652" stroke="#a40018" stroke-width="2"/><rect x="666" y="70" width="1" height="16.5" fill="#b4b49c"/><rect x="695" y="70" width="1" height="16.5" fill="#b4b49c"/><rect x="672.7" y="72.7" width="14.6" height="10.6" fill="#fff" stroke="#000" stroke-width="1.5"/><rect x="675" y="75" width="10.3" height="6" fill="#00e6f0"/><path d="M677 77 H682.8 M677 79 H680.8" stroke="#00565f" stroke-width="1"/><path d="M702.3 77 L704 73.6 L705.3 73.2 L706.3 74 L707.3 73.2 L708.4 73.9 L709.4 73.2 L710.6 73.6 L712 75 L713.5 77.5 L716.6 81.5 M704.6 75.6 L706.3 78.2 M706.5 74.8 L708.3 77.4 M708.6 74.4 L710.3 76.8 M702.3 77 L703.2 78.8 L705.8 80.9 L702.4 82.2 L703.5 83.4 L706 83.9 L711.8 84 L712.8 85.6" fill="none" stroke="#000" stroke-width="1.1" stroke-linejoin="round"/><path d="M713 71.4 L714.4 72.4 L717 71.4 L716.4 74.8 L713.2 74.6 Z" fill="#a40018"/><circle cx="729.8" cy="77" r="4.5" fill="#fff" stroke="#000" stroke-width="1.2"/><path d="M733.2 80.4 L738.2 85.2" stroke="#000" stroke-width="2.4" stroke-linecap="round"/><path d="M734.6 81.4 L738 84.8" stroke="#20a0a8" stroke-width="0.9" stroke-dasharray="1 0.8"/><path d="M734.7 77.3 H740 M737.3 74.7 V79.9" stroke="#a40018" stroke-width="1.3"/><path d="M728 85.4 H732.8" stroke="#a40018" stroke-width="1.4"/></svg>
<svg class="a" style="left:610px;top:87px" width="138" height="199" viewBox="610 87 138 199"><rect x="610" y="87" width="138" height="199" fill="#000"/><rect x="617" y="150" width="16.8" height="88.8" fill="#fff"/><path d="M621 152.2 H630.3 Q631.2 152.2 631.2 153.2 V193.2 H620.3 Q618 172 621 152.2 Z" fill="#000"/><path d="M621 236.6 H630.3 Q631.2 236.6 631.2 235.6 V195.6 H620.3 Q618 217 621 236.6 Z" fill="#000"/><g fill="none" stroke="#fff"><path d="M633 167.2 H743.5 M633 220.6 H743.5" stroke-width="1.5"/><path d="M743.6 166.5 V221.3" stroke-width="2"/><path d="M680.5 167.3 V220.5" stroke-width="1"/></g><g fill="none" stroke="#00e8ee" stroke-width="1.2"><path d="M660.5 166.6 L670 168.3 L680 170.4 H742.5 M660.5 221.2 L670 219.6 L680 217.6 H742.5"/></g><g fill="#ff0000"><rect x="610" y="193.7" width="8" height="1.4"/><rect x="634" y="193.7" width="8" height="1.4"/><rect x="646.5" y="193.7" width="6.5" height="1.4"/><rect x="657" y="193.7" width="3.5" height="1.4"/><rect x="665" y="193.7" width="26" height="1.4"/><rect x="695.5" y="193.7" width="4.5" height="1.4"/><rect x="702" y="193.7" width="5.6" height="1.4"/><rect x="715" y="193.7" width="33" height="1.4"/></g><path d="M627.8 182.6 L629 182.6 L631 186.5 L632.3 187.5 L634.2 187.5 L635.5 186.5 L637.2 182.6 L638.2 183.2 L636.8 189 L636.2 191 L636.2 197.5 L636.8 199.5 L638.2 204.5 L637.2 204.8 L635.5 201.5 L634.2 200.5 L632.3 200.5 L631 201.5 L629 204.8 L627.8 204.5 L629.5 199.5 L630.2 197.5 L630.2 191 L629.5 189 Z" fill="#0000ff"/><rect x="633" y="191" width="1.1" height="1.3" fill="#fff"/><rect x="633" y="196.3" width="1.1" height="1.3" fill="#fff"/></svg>
<div class="a" style="left:610px;top:291px;width:137px;height:58px;background:#fff;border:1px solid #828790;"></div>
<div class="a" style="left:612px;top:293px;width:13px;height:13px;border:1px solid #8e8f8f;background:linear-gradient(135deg,#dcdcdc,#f6f6f6);box-shadow:inset 0 0 0 1px #f4f4f4;"><svg class="a" style="left:0;top:0" width="11" height="11" viewBox="0 0 11 11"><path d="M2.2 5 L4.4 8.2 L8.8 1.6" fill="none" stroke="#38509c" stroke-width="1.9"/></svg></div>
<div class="a" style="left:612px;top:307px;width:13px;height:13px;border:1px solid #8e8f8f;background:linear-gradient(135deg,#dcdcdc,#f6f6f6);box-shadow:inset 0 0 0 1px #f4f4f4;"></div>
<div class="a" style="left:708px;top:293px;width:13px;height:13px;border:1px solid #8e8f8f;background:linear-gradient(135deg,#dcdcdc,#f6f6f6);box-shadow:inset 0 0 0 1px #f4f4f4;"></div>
<div class="a s" style="left:630px;top:294px;width:60px;height:14px;line-height:14px;">主视图</div>
<div class="a s" style="left:630px;top:307.5px;width:60px;height:14px;line-height:14px;">左视图</div>
<div class="a s" style="left:724px;top:293px;width:22px;height:13px;background:#3399ff;color:#fff;line-height:13px;overflow:hidden;">俯视图</div>
<div class="a trk" style="left:611px;top:330px;width:135px;height:18px;"></div>
<div class="a sb" style="left:612px;top:330px;width:17px;height:17px;"></div>
<div class="a sb" style="left:629px;top:330px;width:50px;height:17px;"></div>
<div class="a sb" style="left:728px;top:330px;width:17px;height:17px;"></div>
<div class="a" style="left:611px;top:347px;width:135px;height:1px;background:#fff;"></div>
<svg class="a" style="left:0;top:0" width="766" height="518"><polygon points="622.5,334.5 622.5,342.5 618.5,338.5" fill="#000"/><polygon points="734.5,334.5 734.5,342.5 738.5,338.5" fill="#000"/></svg>
<div class="a btn s" style="left:613px;top:355px;width:57px;height:23px;line-height:25px;">全部清除</div>
<div class="a btn s" style="left:684px;top:355px;width:58px;height:23px;line-height:25px;">全部选择</div>
<div class="a" style="left:603px;top:380px;width:145px;height:100px;overflow:hidden">
<div class="a" style="left:8px;top:8px;width:131px;height:110px;border:1px solid #d5dfe5;border-radius:3px"></div>
<div class="a s" style="left:13px;top:3px;height:14px;line-height:14px;background:#fff;padding:0 2px">出库选项</div>
<div class="a cb" style="left:15px;top:19px"></div><div class="a s" style="left:31px;top:19.5px;width:47px;overflow:hidden">零件编组</div>
<div class="a cb" style="left:78px;top:19px"><svg class="a" style="left:0;top:0" width="11" height="11" viewBox="0 0 11 11"><path d="M1.5 5.3 L4.2 8 L9.6 2.6" fill="none" stroke="#0078d7" stroke-width="1.6"/></svg></div><div class="a s" style="left:94px;top:19.5px;width:49px;overflow:hidden">基本图元</div>
<div class="a cb" style="left:15px;top:42px"><svg class="a" style="left:0;top:0" width="11" height="11" viewBox="0 0 11 11"><path d="M1.5 5.3 L4.2 8 L9.6 2.6" fill="none" stroke="#0078d7" stroke-width="1.6"/></svg></div><div class="a s" style="left:31px;top:42.5px;width:47px;overflow:hidden">零件做块</div>
<div class="a cb" style="left:78px;top:42px"><svg class="a" style="left:0;top:0" width="11" height="11" viewBox="0 0 11 11"><path d="M1.5 5.3 L4.2 8 L9.6 2.6" fill="none" stroke="#0078d7" stroke-width="1.6"/></svg></div><div class="a s" style="left:94px;top:42.5px;width:49px;overflow:hidden">尺寸标注</div>
<div class="a cb" style="left:15px;top:65px"></div><div class="a s" style="left:31px;top:65.5px;width:47px;overflow:hidden">其它标注</div>
<div class="a cb" style="left:78px;top:65px"></div><div class="a s" style="left:94px;top:65.5px;width:49px;overflow:hidden">背景消隐</div>
<div class="a cb" style="left:15px;top:88px"><svg class="a" style="left:0;top:0" width="11" height="11" viewBox="0 0 11 11"><path d="M1.5 5.3 L4.2 8 L9.6 2.6" fill="none" stroke="#0078d7" stroke-width="1.6"/></svg></div><div class="a s" style="left:31px;top:88.5px;width:47px;overflow:hidden">允许拖</div>
<div class="a s" style="left:74px;top:84px;background:#fff;height:16px">比例1:</div>
<div class="a" style="left:110px;top:82px;width:31px;height:17px;background:#fff;border:1px solid #a0a0a0;border-top-color:#e0e0e0"></div>
<div class="a s" style="left:114px;top:85px;width:6px;height:12px;line-height:12px;background:#3399ff;color:#fff">1</div>
<div class="a" style="left:124px;top:85px;width:1px;height:12px;background:#b0b0b0"></div>
<svg class="a" style="left:128px;top:88px" width="8" height="5" viewBox="0 0 8 5"><path d="M0 0 H8 L4 4.5 Z" fill="#222"/></svg>
</div>
<svg class="a" style="left:748px;top:500px" width="14" height="14" viewBox="0 0 14 14"><rect x="10" y="2" width="2" height="2" fill="#3c4048"/><rect x="6" y="6" width="2" height="2" fill="#3c4048"/><rect x="10" y="6" width="2" height="2" fill="#3c4048"/><rect x="2" y="10" width="2" height="2" fill="#3c4048"/><rect x="6" y="10" width="2" height="2" fill="#3c4048"/><rect x="10" y="10" width="2" height="2" fill="#3c4048"/></svg>
<svg class="a" style="left:495px;top:472px;opacity:0.9" width="14" height="21" viewBox="0 0 14 21"><path d="M1 1 V16.5 L4.6 13.2 L7.4 19.6 L9.8 18.5 L7 12.3 H12 Z" fill="#eceef2" stroke="#2a3040" stroke-width="1.1" stroke-linejoin="round"/></svg>
</body></html>
